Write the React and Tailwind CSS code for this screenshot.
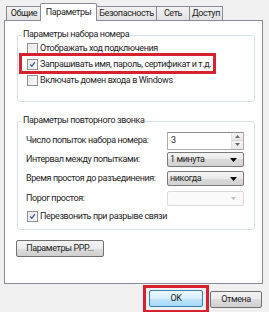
import React from "react";

const font = { fontFamily: 'Roboto, "Open Sans", sans-serif' };

function Check({ checked }) {
  return (
    <span className="inline-flex items-center justify-center w-[11px] h-[11px] border border-[#8f8f8f] bg-[linear-gradient(135deg,#dcdcdc,#ffffff)] shrink-0">
      <span className="w-[9px] h-[9px] border border-[#f4f4f4] bg-[linear-gradient(135deg,#e6e6e6,#fbfbfb)] flex items-center justify-center">
        {checked && (
          <svg width="9" height="9" viewBox="0 0 9 9">
            <path d="M1.5 4.5 L3.5 6.8 L7.6 1.6" fill="none" stroke="#3d5a98" strokeWidth="1.6" />
          </svg>
        )}
      </span>
    </span>
  );
}

function Tab({ label, w, active }) {
  if (active) {
    return (
      <div
        className="h-[18px] -mb-px bg-white border border-[#898c95] border-b-0 rounded-t-[2px] flex items-center justify-center text-[#1e1e1e] z-10 -mx-[1px] whitespace-nowrap"
        style={{ width: w }}
      >
        {label}
      </div>
    );
  }
  return (
    <div
      className="h-[14px] bg-[linear-gradient(#f2f2f2,#e2e2e2)] border border-[#898c95] border-b-0 border-r-0 last:border-r flex items-center justify-center text-[#1e1e1e] whitespace-nowrap"
      style={{ width: w }}
    >
      {label}
    </div>
  );
}

function Combo({ value, disabled }) {
  if (disabled) {
    return (
      <div className="w-[77px] h-[15px] border border-[#dadada] rounded-[2px] bg-[#fafafa] flex items-center justify-end pr-[7px]">
        <svg width="5" height="3" viewBox="0 0 5 3"><path d="M0 0 H5 L2.5 3 Z" fill="#c0c0c0" /></svg>
      </div>
    );
  }
  return (
    <div className="w-[77px] h-[15px] border border-[#7a7a7a] rounded-[2px] bg-[linear-gradient(#f4f4f4,#e9e9e9_50%,#dadada_50%,#d2d2d2)] flex items-center justify-between pl-[2px] pr-[6px] text-[#1e1e1e]">
      <span>{value}</span>
      <svg width="7" height="4" viewBox="0 0 7 4"><path d="M0 0 H7 L3.5 4 Z" fill="#000" /></svg>
    </div>
  );
}

function Btn({ children, w, def }) {
  return (
    <div
      className={`h-[17px] rounded-[2px] border flex items-center justify-center text-[#1e1e1e] whitespace-nowrap ${
        def
          ? "border-[#3c7fb1] bg-[linear-gradient(#eaf6fd,#d9f0fc_50%,#bee6fd_50%,#a7d9f5)]"
          : "border-[#707070] bg-[linear-gradient(#f2f2f2,#ebebeb_50%,#dddddd_50%,#cfcfcf)]"
      }`}
      style={{ width: w }}
    >
      {children}
    </div>
  );
}

export default function App() {
  return (
    <div className="w-[269px] h-[312px] bg-[#f0f0f0] text-[9px] leading-none overflow-hidden relative tracking-[-0.4px]" style={font}>
      {/* Tabs */}
      <div className="flex items-end pl-[6px] pt-[3px] h-[20px]">
        <Tab label="Общие" w={35} />
        <Tab label="Параметры" w={57} active />
        <Tab label="Безопасность" w={60} />
        <Tab label="Сеть" w={33} />
        <Tab label="Доступ" w={34} />
      </div>
      {/* Panel */}
      <div className="mx-[4px] w-[259px] h-[264px] bg-white border border-[#898c95] pl-[12px] pr-[7px] pt-[9px] flex flex-col text-[#1e1e1e]">
        {/* Group 1 */}
        <div className="relative w-[238px] h-[67px] border border-[#d5dfe5] rounded-[3px] mt-[5px] shrink-0">
          <span className="absolute -top-[6px] left-[4px] bg-white px-[1px] whitespace-nowrap">Параметры набора номера</span>
          <div className="flex flex-col pl-[9px] pt-[4px]">
            <div className="h-[16px] flex items-center gap-[2px] whitespace-nowrap">
              <Check /> <span>Отображать ход подключения</span>
            </div>
            <div className="h-[16px] flex items-center gap-[2px] whitespace-nowrap">
              <Check checked /> <span>Запрашивать имя, пароль, сертификат и т.д.</span>
            </div>
            <div className="h-[16px] flex items-center gap-[2px] whitespace-nowrap">
              <Check /> <span>Включать домен входа в Windows</span>
            </div>
          </div>
        </div>
        {/* Group 2 */}
        <div className="relative w-[238px] h-[109px] border border-[#d5dfe5] rounded-[3px] mt-[19px] shrink-0">
          <span className="absolute -top-[6px] left-[4px] bg-white px-[1px] whitespace-nowrap">Параметры повторного звонка</span>
          <div className="flex flex-col pl-[8px] pr-[10px] pt-[9px] whitespace-nowrap">
            <div className="h-[19px] flex items-center justify-between">
              <span>Число попыток набора номера:</span>
              <div className="w-[77px] h-[18px] border border-[#abadb3] border-t-[#8e8f8f] flex items-center justify-between pl-[3px]">
                <span>3</span>
                <div className="flex flex-col w-[12px] h-full border-l border-[#e3e3e3]">
                  <div className="flex-1 flex items-center justify-center bg-[linear-gradient(#f5f5f5,#e8e8e8)] border-b border-[#d6d6d6]">
                    <svg width="5" height="3" viewBox="0 0 5 3"><path d="M0 3 H5 L2.5 0 Z" fill="#6a6a6a" /></svg>
                  </div>
                  <div className="flex-1 flex items-center justify-center bg-[linear-gradient(#f5f5f5,#e8e8e8)]">
                    <svg width="5" height="3" viewBox="0 0 5 3"><path d="M0 0 H5 L2.5 3 Z" fill="#6a6a6a" /></svg>
                  </div>
                </div>
              </div>
            </div>
            <div className="h-[19px] flex items-center justify-between">
              <span>Интервал между попытками:</span>
              <Combo value="1 минута" />
            </div>
            <div className="h-[19px] flex items-center justify-between">
              <span>Время простоя до разъединения:</span>
              <Combo value="никогда" />
            </div>
            <div className="h-[20px] flex items-center justify-between">
              <span>Порог простоя:</span>
              <Combo disabled />
            </div>
            <div className="h-[16px] flex items-center gap-[2px] pl-[1px]">
              <Check checked /> <span>Перезвонить при разрыве связи</span>
            </div>
          </div>
        </div>
        {/* PPP button */}
        <div className="mt-[10px] -ml-[1px]">
          <Btn w={88}>Параметры PPP...</Btn>
        </div>
      </div>
      {/* Bottom buttons */}
      <div className="flex justify-end items-end gap-[1px] pr-[7px] h-[29px]">
        <div className="border-[3px] border-[#d6222e] px-[3px] pt-[2px] pb-[3px] flex">
          <Btn w={54} def>OK</Btn>
        </div>
        <div className="pb-[5px]">
          <Btn w={52}>Отмена</Btn>
        </div>
      </div>
      {/* Red highlight box on row 2 */}
      <div className="absolute left-[19px] top-[53px] w-[197px] h-[21px] border-[3px] border-[#d6222e] pointer-events-none" />
    </div>
  );
}
